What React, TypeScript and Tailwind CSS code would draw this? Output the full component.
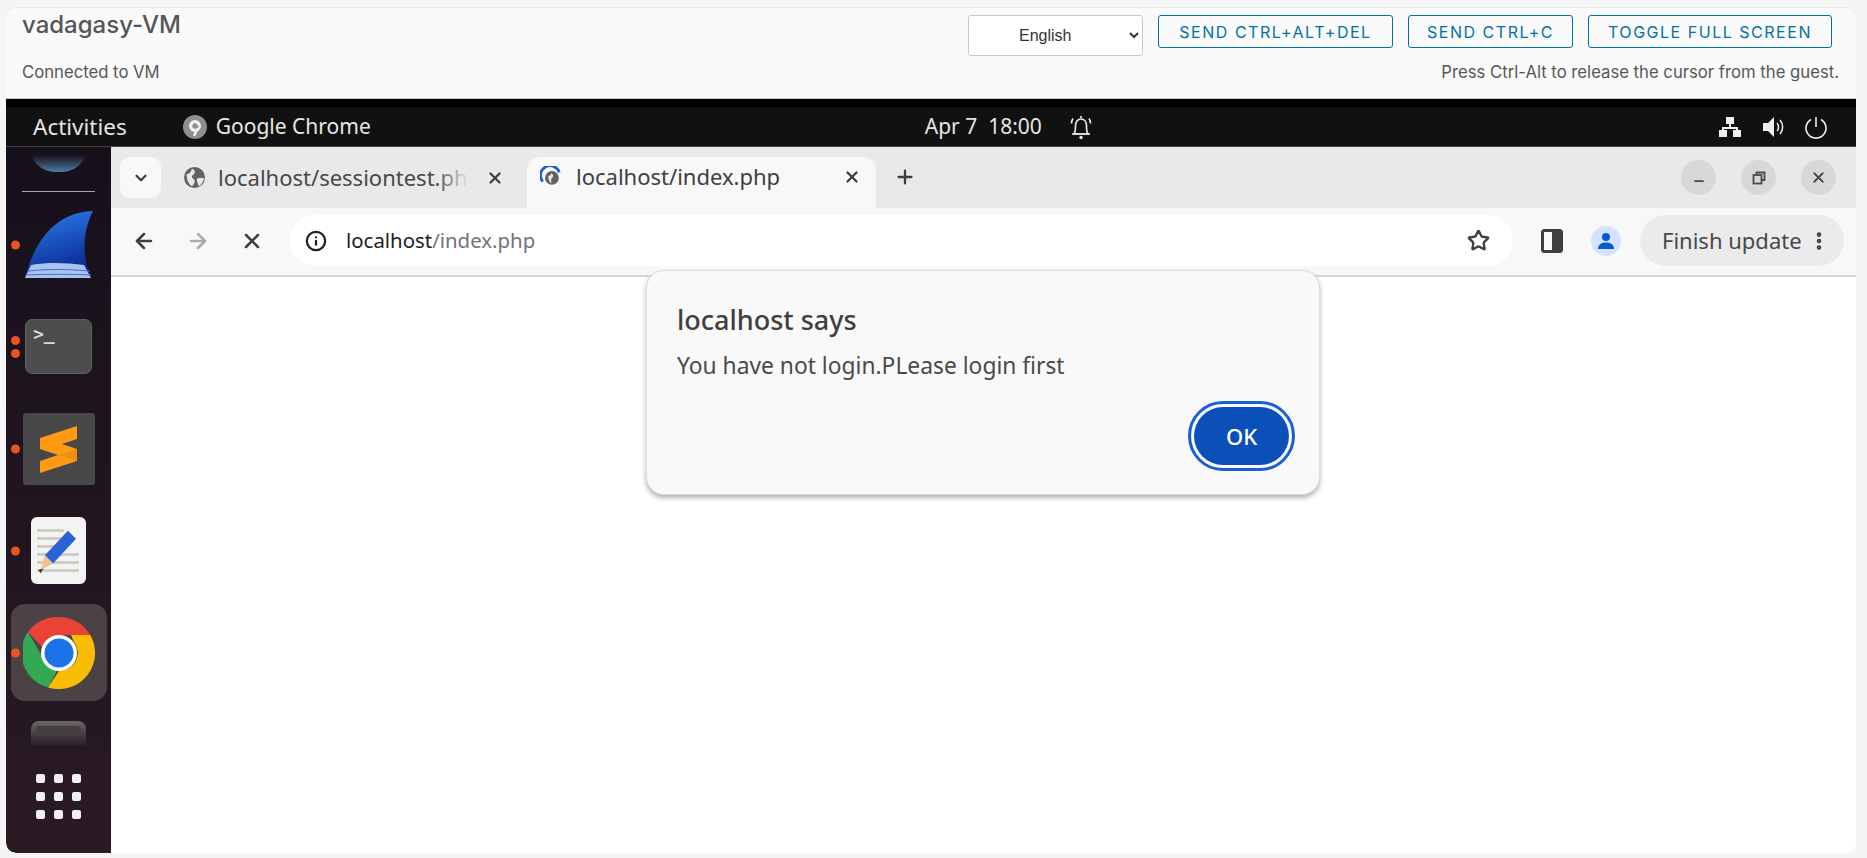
import React from 'react';
import { ArrowLeft, ArrowRight, X, Star, Plus, ChevronDown, Info, Minus, EllipsisVertical } from 'lucide-react';

const ubuntu = "font-['Noto_Sans','Open_Sans',sans-serif]";

const Globe: React.FC<{ className?: string }> = ({ className }) => (
  <svg viewBox="0 0 24 24" className={className}>
    <circle cx="12" cy="12" r="12" fill="#5f6368" />
    <path d="M3 8c3 0 5-2 6-6 3 1 4 3 3 5s-3 2-3 4 2 2 3 4-1 5-3 7C6 20 3 16 3 8zM15 13c3-1 6-1 8 0-1 4-3 7-6 9-1-3-3-7-2-9z" fill="#e8e8e8" />
  </svg>
);

const ChromeLogo: React.FC<{ className?: string }> = ({ className }) => (
  <svg viewBox="0 0 72 72" className={className}>
    <path d="M36 0a36 36 0 0 1 31.2 18H36a18 18 0 0 0-17 12L5 15A36 36 0 0 1 36 0z" fill="#ea4335" />
    <path d="M5 15l15 26a18 18 0 0 0 14 13L25 70.5A36 36 0 0 1 5 15z" fill="#34a853" />
    <path d="M67.2 18A36 36 0 0 1 36 72q-6 0-11-1.500L36 54a18 18 0 0 0 15-29l-3-7z" fill="#fbbc04" />
    <circle cx="36" cy="36" r="18" fill="#fff" />
    <circle cx="36" cy="36" r="14.500" fill="#1a73e8" />
  </svg>
);

const Dot: React.FC = () => <span className="block size-[9px] rounded-full bg-[#e95420]" />;

const DockItem: React.FC<{ dots?: number; className?: string; children: React.ReactNode }> = ({ dots = 1, className, children }) => (
  <div className={`relative flex w-full justify-center ${className ?? ''}`}>
    <div className="absolute left-[5px] top-1/2 flex -translate-y-1/2 flex-col gap-[4px]">
      {Array.from({ length: dots }).map((_, i) => (
        <Dot key={i} />
      ))}
    </div>
    {children}
  </div>
);

const Dock: React.FC = () => (
  <div className="flex w-[105px] shrink-0 flex-col items-center overflow-hidden rounded-bl-[10px] bg-gradient-to-b from-[#16101a] to-[#2a1a24]">
    <div className="h-[25px] w-[57px] rounded-b-[28px] bg-gradient-to-b from-[#16101a] from-30% to-[#4a7fa6]" />
    <div className="mt-[19px] h-[1px] w-[73px] bg-[#a8a4a8]" />
    <DockItem className="mt-[19px]">
      <svg viewBox="0 0 69 68" className="h-[68px] w-[69px]">
        <defs>
          <linearGradient id="fin" x1="0" y1="0" x2="0.3" y2="1">
            <stop offset="0" stopColor="#2f80ee" />
            <stop offset="1" stopColor="#0a2a94" />
          </linearGradient>
        </defs>
        <path d="M69 0C36 1 12 24 1 67h66C58 46 58 22 69 0z" fill="url(#fin)" />
        <path d="M7 54c18-3 36-2 53 0l7 13H1z" fill="#a9c2ee" />
        <path d="M4 60c18-2 40-2 62 0M3 64c20-1 42-1 64 0" fill="none" stroke="#3d6fd0" strokeWidth="1" />
      </svg>
    </DockItem>
    <DockItem dots={2} className="mt-[40px]">
      <div className="flex h-[55px] w-[67px] items-start rounded-[7px] border border-[#5e5e5e] bg-[#4d4d4d] pl-[7px] pt-[3px] font-['DejaVu_Sans_Mono',monospace] text-[18px] font-bold leading-[22px] text-[#d8d8d8]">
        {'>_'}
      </div>
    </DockItem>
    <DockItem className="mt-[39px]">
      <div className="flex size-[72px] items-center justify-center rounded-[3px] bg-[#484848]">
        <svg viewBox="0 0 37 47" className="h-[47px] w-[37px]">
          <path d="M0 12L37 0v13l-15 5 15 5v12L0 47V35l18-6-18-6z" fill="#ff9a13" />
          <path d="M18 29l19-6v12z" fill="#ef8e10" />
        </svg>
      </div>
    </DockItem>
    <DockItem className="mt-[32px]">
      <div className="relative h-[67px] w-[55px] rounded-[6px] bg-[#f3f3f3] pl-[6px] pt-[12px]">
        <div className="flex flex-col gap-[5px]">
          <div className="h-[3px] w-[27px] bg-[#cfcdc4]" />
          <div className="h-[3px] w-[36px] bg-[#cfcdc4]" />
          <div className="h-[3px] w-[20px] bg-[#cfcdc4]" />
          <div className="h-[3px] w-[42px] bg-[#cfcdc4]" />
          <div className="h-[3px] w-[42px] bg-[#cfcdc4]" />
          <div className="h-[3px] w-[42px] bg-[#cfcdc4]" />
        </div>
        <svg viewBox="0 0 48 56" className="absolute left-[7px] top-[12px] h-[46px] w-[40px]">
          <path d="M36 2l10 10-28 30-10-10z" fill="#2a62d8" />
          <path d="M8 32l10 10-15 8z" fill="#f0c090" />
          <path d="M0 50l6-2-3 6z" fill="#333" />
        </svg>
      </div>
    </DockItem>
    <DockItem className="mt-[20px]">
      <div className="flex h-[97px] w-[96px] items-center justify-center rounded-[14px] bg-[#4a4245]">
        <ChromeLogo className="size-[72px]" />
      </div>
    </DockItem>
    <div className="mt-[20px] h-[25px] w-[55px] rounded-t-[8px] bg-gradient-to-b from-[#6a6666] to-[#2a1f26] px-[5px] pt-[5px]">
      <div className="h-[8px] rounded-[4px] bg-[#423d40]" />
    </div>
    <div className="mt-[28px] grid grid-cols-3 gap-[9px]">
      {Array.from({ length: 9 }).map((_, i) => (
        <span key={i} className="size-[9px] rounded-[2px] bg-[#f0f0f0]" />
      ))}
    </div>
  </div>
);

const Browser: React.FC = () => (
  <div className={`relative flex min-w-0 flex-1 flex-col bg-white ${ubuntu}`}>
    {/* tab strip */}
    <div className="flex h-[61px] items-end bg-[#e9e9e9] pl-[9px]">
      <div className="mb-[10px] flex h-[41px] w-[41px] items-center justify-center rounded-[10px] bg-[#f8f8f8]">
        <ChevronDown size={18} strokeWidth={3} className="text-[#3c4043]" />
      </div>
      <div className="mb-[10px] ml-[23px] flex h-[41px] w-[343px] items-center">
        <Globe className="size-[21px]" />
        <div className="relative ml-[13px] mb-[2px] w-[251px] overflow-hidden whitespace-nowrap text-[22px] leading-[38px] text-[#45484c]">
          localhost/sessiontest.php
          <div className="absolute inset-y-0 right-0 w-[34px] bg-gradient-to-r from-[#e9e9e900] to-[#e9e9e9]" />
        </div>
        <X size={18} strokeWidth={3} className="ml-[17px] text-[#3c4043]" />
      </div>
      <div className="flex h-[51px] w-[349px] items-center rounded-t-[14px] bg-[#f8f8f8] pb-[11px] pl-[13px]">
        <svg viewBox="0 0 24 24" className="size-[22px]">
          <path d="M3 17A10.500 10.500 0 1 1 21 7" fill="none" stroke="#1a5fd0" strokeWidth="3" />
          <circle cx="13" cy="13" r="7.500" fill="#5f6368" />
          <path d="M9 11c2 0 3-1 3-3 2 1 3 2 2 4s-2 2-2 3 1 2 0 4c-2-2-3-5-3-8z" fill="#e8e8e8" />
        </svg>
        <span className="mb-[2px] ml-[14px] w-[260px] whitespace-nowrap text-[22px] leading-[38px] text-[#3c4043]">localhost/index.php</span>
        <X size={18} strokeWidth={3} className="ml-[7px] text-[#3c4043]" />
      </div>
      <Plus size={22} strokeWidth={2.5} className="mb-[20px] ml-[18px] text-[#3c4043]" />
      <div className="mb-[13px] ml-auto mr-[20px] flex gap-[25px]">
        <div className="flex size-[35px] items-center justify-center rounded-full bg-[#d8d8d8]">
          <Minus size={14} strokeWidth={3} className="mt-[6px] text-[#4a4a4a]" />
        </div>
        <div className="flex size-[35px] items-center justify-center rounded-full bg-[#d8d8d8]">
          <svg viewBox="0 0 14 14" className="size-[14px]" fill="none" stroke="#4a4a4a" strokeWidth="1.800">
            <rect x="1.500" y="4" width="8" height="8.500" />
            <path d="M4.500 4V1.500h8V9H9.500" />
          </svg>
        </div>
        <div className="flex size-[35px] items-center justify-center rounded-full bg-[#d8d8d8]">
          <X size={17} strokeWidth={2.5} className="text-[#4a4a4a]" />
        </div>
      </div>
    </div>
    {/* toolbar */}
    <div className="flex h-[69px] items-center border-b-2 border-[#d4d4d4] bg-[#f8f8f8] pb-[2px]">
      <ArrowLeft size={24} strokeWidth={2.5} className="ml-[21px] text-[#3c4043]" />
      <ArrowRight size={24} strokeWidth={2.5} className="ml-[30px] text-[#a9abad]" />
      <X size={24} strokeWidth={2.5} className="ml-[30px] text-[#3c4043]" />
      <div className="ml-[26px] flex h-[51px] w-[1223px] items-center rounded-full bg-white pl-[15px]">
        <Info size={22} strokeWidth={2.5} className="text-[#202124]" />
        <span className="ml-[19px] whitespace-nowrap text-[20.4px] text-[#202124]">
          localhost<span className="text-[#70757a]">/index.php</span>
        </span>
        <Star size={23} strokeWidth={2.5} className="ml-auto mr-[23px] text-[#3c4043]" />
      </div>
      <svg viewBox="0 0 22 24" className="ml-[28px] h-[24px] w-[22px]">
        <rect x="1.500" y="1.500" width="19" height="21" rx="2" fill="none" stroke="#3c4043" strokeWidth="3" />
        <rect x="11" y="1.500" width="9.500" height="21" fill="#3c4043" />
      </svg>
      <div className="ml-[28px] flex size-[30px] items-center justify-center rounded-full bg-[#d3e3fd]">
        <svg viewBox="0 0 20 20" className="size-[20px]" fill="#0b57d0">
          <circle cx="10" cy="6" r="4" />
          <path d="M2 18c0-5 4-6.500 8-6.500s8 1.500 8 6.500z" />
        </svg>
      </div>
      <div className="ml-[19px] flex h-[51px] w-[204px] items-center rounded-full bg-[#ebebeb] pl-[22px] text-[22px] text-[#45484c]">
        <span className="whitespace-nowrap">Finish update</span>
        <EllipsisVertical size={22} strokeWidth={3} className="ml-[6px] shrink-0 text-[#3c4043]" />
      </div>
    </div>
    <div className="flex-1 bg-white" />
    {/* alert dialog, sits over the page */}
    <div className="absolute left-[535px] top-[123px] flex h-[225px] w-[674px] flex-col rounded-[18px] border border-[#dcdcdc] bg-[#f9f9f9] pl-[30px] pr-[24px] pt-[29px] shadow-[0_3px_5px_rgba(0,0,0,0.3)]">
      <div className="text-[27px] font-medium leading-[40px] text-[#3f3f3f]">localhost says</div>
      <div className="mt-[6px] text-[22.8px] leading-[40px] text-[#4a4a4a]">You have not login.PLease login first</div>
      <div className="mt-[15px] flex justify-end">
        <div className="flex h-[70px] w-[107px] items-center justify-center rounded-full border-[3px] border-[#1a5fd0] bg-[#f9f9f9] p-[3px]">
          <div className="flex size-full items-center justify-center rounded-full bg-[#0b50b8] text-[22px] font-medium text-white">OK</div>
        </div>
      </div>
    </div>
  </div>
);

const App: React.FC = () => (
  <div className="h-[858px] w-[1867px] overflow-hidden bg-[#f5f5f5] pl-[6px] pt-[7px]">
    <div className="flex h-[846px] w-[1850px] flex-col overflow-hidden rounded-[10px] border-t border-[#e8e8e8] bg-[#fafafa]">
      {/* console header */}
      <div className="flex h-[90px] shrink-0 justify-between font-['Inter',sans-serif] text-[#565656]">
        <div className="pl-[16px]">
          <div className="mt-[2px] text-[24px] font-medium leading-[30px]">vadagasy-VM</div>
          <div className="mt-[22px] text-[16.7px] leading-[20px]">Connected to VM</div>
        </div>
        <div className="flex flex-col items-end pr-[24px]">
          <div className="mt-[7px] flex items-start">
            <select
              defaultValue="en"
              className="h-[41px] w-[175px] rounded-[3px] border border-[#c8c8c8] bg-white pl-[46px] font-['Liberation_Sans',sans-serif] text-[16px] text-[#333]"
            >
              <option value="en">English</option>
            </select>
            <button className="ml-[15px] h-[33px] w-[235px] rounded-[3px] border border-[#0072a3] pt-[1px] text-[16px] tracking-[0.095em] text-[#0072a3]">SEND CTRL+ALT+DEL</button>
            <button className="ml-[15px] h-[33px] w-[165px] rounded-[3px] border border-[#0072a3] pt-[1px] text-[16px] tracking-[0.095em] text-[#0072a3]">SEND CTRL+C</button>
            <button className="ml-[15px] h-[33px] w-[244px] rounded-[3px] border border-[#0072a3] pt-[1px] text-[16px] tracking-[0.095em] text-[#0072a3]">TOGGLE FULL SCREEN</button>
          </div>
          <div className="mr-[-7px] mt-[6px] text-[16.7px] leading-[20px]">Press Ctrl-Alt to release the cursor from the guest.</div>
        </div>
      </div>
      {/* guest screen */}
      <div className="flex min-h-0 flex-1 flex-col border-t border-[#c8c8c8]">
        <div className="flex h-[48px] shrink-0 items-center border-b border-[#444] border-t-[8px] border-t-black bg-[#111111] text-[#e6e6e6]">
          <div className={`relative flex w-full items-center ${ubuntu}`}>
            <span className="ml-[27px] text-[22.5px]">Activities</span>
            <svg viewBox="0 0 24 24" className="ml-[56px] size-[24px]">
              <circle cx="12" cy="12" r="12" fill="#8e8e8e" />
              <path d="M16 11a4 4 0 1 0-2 3.500L11 21" fill="none" stroke="#f0f0f0" strokeWidth="2.500" />
              <circle cx="12" cy="11" r="5" fill="none" stroke="#f0f0f0" strokeWidth="2" />
            </svg>
            <span className="ml-[9px] text-[21px]">Google Chrome</span>
            <div className="ml-[554px] flex items-center">
              <span className="whitespace-nowrap text-[21px]">Apr 7&nbsp;&nbsp;18:00</span>
              <svg viewBox="0 0 22 26" className="ml-[28px] h-[26px] w-[22px]" fill="none" stroke="#e6e6e6" strokeWidth="1.700">
                <path d="M4 20c1.500-2 1.500-5 1.500-8 0-4 2-7 5.500-7s5.500 3 5.500 7c0 3 0 6 1.500 8z" />
                <path d="M2 20h18M3 4.500C2 6 1.500 7.500 1.500 9.500M19 4.500c1 1.500 1.500 3 1.500 5M11 2v2" />
                <circle cx="11" cy="23.500" r="1.700" fill="#e6e6e6" stroke="none" />
              </svg>
            </div>
            <div className="ml-auto mr-[28px] flex items-center gap-[19px]">
              <svg viewBox="0 0 24 24" className="size-[24px]" fill="#eee">
                <rect x="8" y="2" width="8" height="7" />
                <rect x="1" y="15" width="8" height="7" />
                <rect x="15" y="15" width="8" height="7" />
                <path d="M11 9h2v3h7v3h-2v-1H6v1H4v-3h7z" />
              </svg>
              <svg viewBox="0 0 24 24" className="size-[24px]" fill="#eee">
                <path d="M2 8h5l6-6v20l-6-6H2z" />
                <path d="M16 8c2 2 2 6 0 8M19 5c3.500 4 3.500 10 0 14" fill="none" stroke="#eee" strokeWidth="1.500" />
              </svg>
              <svg viewBox="0 0 24 24" className="size-[24px]" fill="none" stroke="#eee" strokeWidth="1.600">
                <path d="M12 2v10M7 4.500a10 10 0 1 0 10 0" />
              </svg>
            </div>
          </div>
        </div>
        <div className="flex min-h-0 flex-1">
          <Dock />
          <Browser />
        </div>
      </div>
    </div>
  </div>
);

export default App;
